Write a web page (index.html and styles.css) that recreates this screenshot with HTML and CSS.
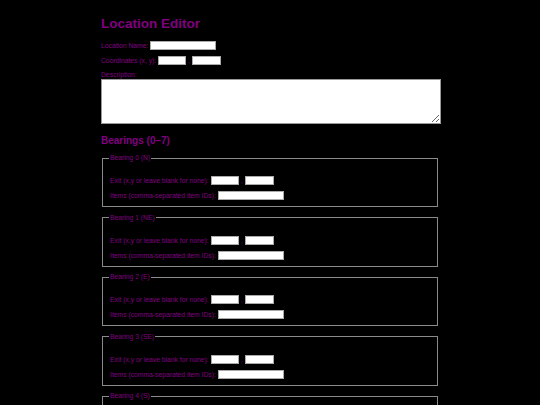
FILE: index.html
```html
<!DOCTYPE html>
<html>
<head>
<meta charset="utf-8">
<title>Location Editor</title>
<link rel="stylesheet" href="styles.css">
</head>
<body>
<div class="container">
  <h1 class="title">Location Editor</h1>
  <div class="row"><label>Location Name:</label><input class="inp wide" type="text"></div>
  <div class="row"><label>Coordinates (x, y):</label><input class="inp short" type="text"><span class="comma">,</span><input class="inp short tight" type="text"></div>
  <div class="desc-label">Description:</div>
  <textarea class="desc"></textarea>
  <h2 class="subtitle">Bearings (0–7)</h2>

  <fieldset class="bearing">
    <legend>Bearing 0 (N)</legend>
    <div class="row first"><label>Exit (x,y or leave blank for none):</label><input class="inp short" type="text"><span class="comma">,</span><input class="inp short tight" type="text"></div>
    <div class="row"><label>Items (comma-separated item IDs):</label><input class="inp wide" type="text"></div>
  </fieldset>
  <fieldset class="bearing">
    <legend>Bearing 1 (NE)</legend>
    <div class="row first"><label>Exit (x,y or leave blank for none):</label><input class="inp short" type="text"><span class="comma">,</span><input class="inp short tight" type="text"></div>
    <div class="row"><label>Items (comma-separated item IDs):</label><input class="inp wide" type="text"></div>
  </fieldset>
  <fieldset class="bearing">
    <legend>Bearing 2 (E)</legend>
    <div class="row first"><label>Exit (x,y or leave blank for none):</label><input class="inp short" type="text"><span class="comma">,</span><input class="inp short tight" type="text"></div>
    <div class="row"><label>Items (comma-separated item IDs):</label><input class="inp wide" type="text"></div>
  </fieldset>
  <fieldset class="bearing">
    <legend>Bearing 3 (SE)</legend>
    <div class="row first"><label>Exit (x,y or leave blank for none):</label><input class="inp short" type="text"><span class="comma">,</span><input class="inp short tight" type="text"></div>
    <div class="row"><label>Items (comma-separated item IDs):</label><input class="inp wide" type="text"></div>
  </fieldset>
  <fieldset class="bearing">
    <legend>Bearing 4 (S)</legend>
    <div class="row first"><label>Exit (x,y or leave blank for none):</label><input class="inp short" type="text"><span class="comma">,</span><input class="inp short tight" type="text"></div>
    <div class="row"><label>Items (comma-separated item IDs):</label><input class="inp wide" type="text"></div>
  </fieldset>
</div>
</body>
</html>
```
FILE: styles.css
```css
html, body {
  margin: 0;
  padding: 0;
  background: #000;
}
body {
  font-family: "Liberation Sans", Arial, sans-serif;
  color: #800080;
  font-size: 6.75px;
  padding-left: 2px;
}
.container {
  width: 340px;
  margin: 0 auto;
  padding-top: 15px;
}
.title {
  font-size: 13.5px;
  line-height: 17px;
  font-weight: bold;
  margin: 0 0 9px 0;
}
.row {
  display: flex;
  align-items: center;
  height: 9px;
  line-height: 9px;
  margin-bottom: 6px;
  white-space: nowrap;
}
.row label {
  line-height: 9px;
}
.inp {
  box-sizing: border-box;
  height: 9px;
  margin: 0 0 0 2px;
  padding: 0;
  border: 1px solid #aaa;
  background: #fff;
  font-size: 6px;
}
.wide { width: 66px; }
.short { width: 28px; }
.tight { margin-left: 0; width: 29px; }
.comma {
  margin: 0 2px 0 2px;
}
.desc-label {
  line-height: 8px;
  margin-top: 6px;
}
.desc {
  display: block;
  box-sizing: border-box;
  width: 340px;
  height: 45px;
  margin: 0;
  padding: 0;
  border: 1px solid #999;
  background: #fff;
}
.subtitle {
  font-size: 10px;
  line-height: 13px;
  font-weight: bold;
  margin: 10px 0 7px 0;
}
.bearing {
  margin: 0 3px 6.5px 1px;
  padding: 0 7px 6px 7px;
  border: 1px solid #8a8a8a;
  min-width: 0;
}
.bearing legend {
  font-size: 6.75px;
  line-height: 8px;
  padding: 0 1px;
  margin-left: -1px;
}
.bearing .row.first {
  margin-top: 14px;
}
.bearing .row:last-child {
  margin-bottom: 0;
}
```
